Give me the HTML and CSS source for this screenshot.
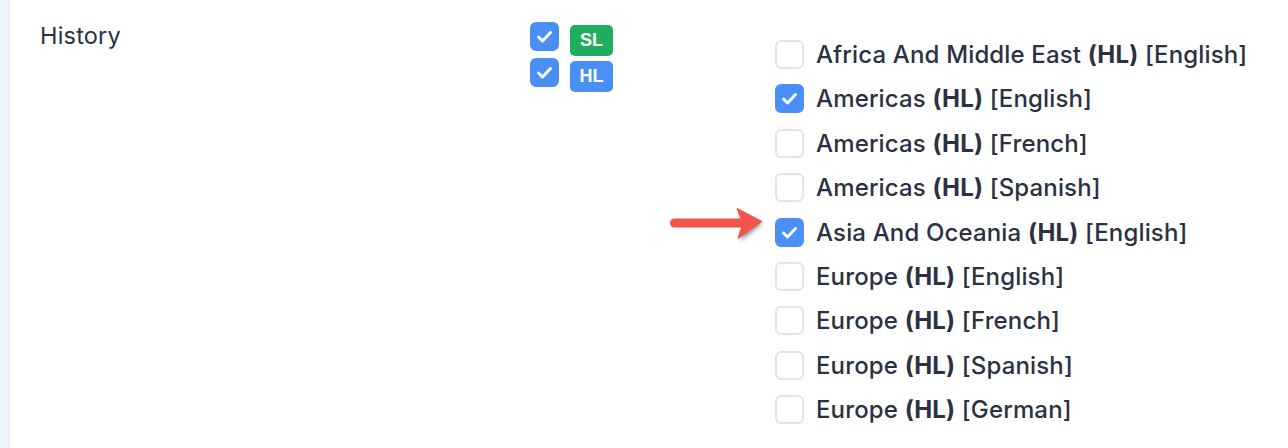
FILE: index.html
```html
<!DOCTYPE html>
<html>
<head>
<meta charset="utf-8">
<link rel="stylesheet" href="styles.css">
</head>
<body>
<div class="page">
  <div class="strip"></div>
  <div class="content">
    <div class="label">History</div>
    <div class="levels">
      <div class="level">
        <span class="box checked"><svg viewBox="0 0 29 29"><path d="M8.5 15 L12.5 19 L20.5 10.5"/></svg></span>
        <span class="badge sl">SL</span>
      </div>
      <div class="level">
        <span class="box checked"><svg viewBox="0 0 29 29"><path d="M8.5 15 L12.5 19 L20.5 10.5"/></svg></span>
        <span class="badge hl">HL</span>
      </div>
    </div>
    <div class="list">
      <div class="row"><span class="box"></span><span class="text">Africa And Middle East <b>(HL)</b> [English]</span></div>
      <div class="row"><span class="box checked"><svg viewBox="0 0 29 29"><path d="M8.5 15 L12.5 19 L20.5 10.5"/></svg></span><span class="text">Americas <b>(HL)</b> [English]</span></div>
      <div class="row"><span class="box"></span><span class="text">Americas <b>(HL)</b> [French]</span></div>
      <div class="row"><span class="box"></span><span class="text">Americas <b>(HL)</b> [Spanish]</span></div>
      <div class="row">
        <svg class="arrow" viewBox="0 0 100 40" width="100" height="40">
          <defs>
            <filter id="sh" x="-20%" y="-60%" width="140%" height="220%">
              <feGaussianBlur stdDeviation="2.2"/>
            </filter>
          </defs>
          <path d="M5 21.5 H72" stroke="#222" stroke-width="8" stroke-linecap="round" opacity="0.75" filter="url(#sh)"/>
          <path d="M70 6 L94 18 L72 35 L76 20 Z" fill="#222" opacity="0.5" filter="url(#sh)"/>
          <path d="M6.5 17 H74" stroke="#f2534a" stroke-width="9" stroke-linecap="round"/>
          <path d="M69 2.4 L94 15.5 L70 32.4 L75 17 Z" fill="#f2534a" stroke="#f2534a" stroke-width="1" stroke-linejoin="round"/>
        </svg>
        <span class="box checked"><svg viewBox="0 0 29 29"><path d="M8.5 15 L12.5 19 L20.5 10.5"/></svg></span><span class="text">Asia And Oceania <b>(HL)</b> [English]</span></div>
      <div class="row"><span class="box"></span><span class="text">Europe <b>(HL)</b> [English]</span></div>
      <div class="row"><span class="box"></span><span class="text">Europe <b>(HL)</b> [French]</span></div>
      <div class="row"><span class="box"></span><span class="text">Europe <b>(HL)</b> [Spanish]</span></div>
      <div class="row"><span class="box"></span><span class="text">Europe <b>(HL)</b> [German]</span></div>
    </div>
  </div>
</div>
</body>
</html>
```
FILE: styles.css
```css
html, body {
  margin: 0;
  padding: 0;
  background: #ffffff;
}
body {
  font-family: Inter, "Noto Sans", sans-serif;
  color: #2a3143;
}
.page {
  display: flex;
  width: 1288px;
  height: 448px;
  overflow: hidden;
}
.strip {
  width: 10px;
  flex: none;
  background: linear-gradient(to right, #eef5fe 0, #eef5fe 6px, #e6edf7 10px);
}
.content {
  display: flex;
  padding-left: 30px;
}
.label {
  width: 490px;
  flex: none;
  font-size: 23.5px;
  padding-top: 21px;
  line-height: 29px;
  letter-spacing: 0.2px;
}
.levels {
  width: 245px;
  flex: none;
  padding-top: 22px;
  display: flex;
  flex-direction: column;
  gap: 7px;
}
.level {
  display: flex;
  align-items: flex-start;
  gap: 11px;
  height: 29px;
}
.box {
  width: 29px;
  height: 29px;
  box-sizing: border-box;
  border: 2px solid #e3e4e7;
  border-radius: 6px;
  background: #fff;
  flex: none;
  display: flex;
  align-items: center;
  justify-content: center;
}
.box.checked {
  background: #4a8ff6;
  border-color: #4a8ff6;
}
.box svg {
  width: 29px;
  height: 29px;
  flex: none;
  margin: -2px;
}
.box svg path {
  fill: none;
  stroke: #fff;
  stroke-width: 3;
  stroke-linecap: round;
  stroke-linejoin: round;
}
.badge {
  margin-top: 3px;
  width: 43px;
  height: 31px;
  border-radius: 5px;
  color: #fff;
  font-weight: 700;
  font-size: 18px;
  display: flex;
  align-items: center;
  justify-content: center;
  font-family: "Liberation Sans", Arial, sans-serif;
  flex: none;
}
.badge.sl { background: #1fae5c; }
.badge.hl { background: #4a8ff6; }
.list {
  padding-top: 40px;
  display: flex;
  flex-direction: column;
}
.row {
  position: relative;
  height: 44.4px;
  display: flex;
  align-items: flex-start;
  gap: 12px;
}
.row .text {
  font-size: 24px;
  line-height: 29px;
  font-weight: 500;
  letter-spacing: 0.15px;
}
.row .text b {
  font-weight: 700;
}
.arrow {
  position: absolute;
  left: -107px;
  top: -12px;
}
```
